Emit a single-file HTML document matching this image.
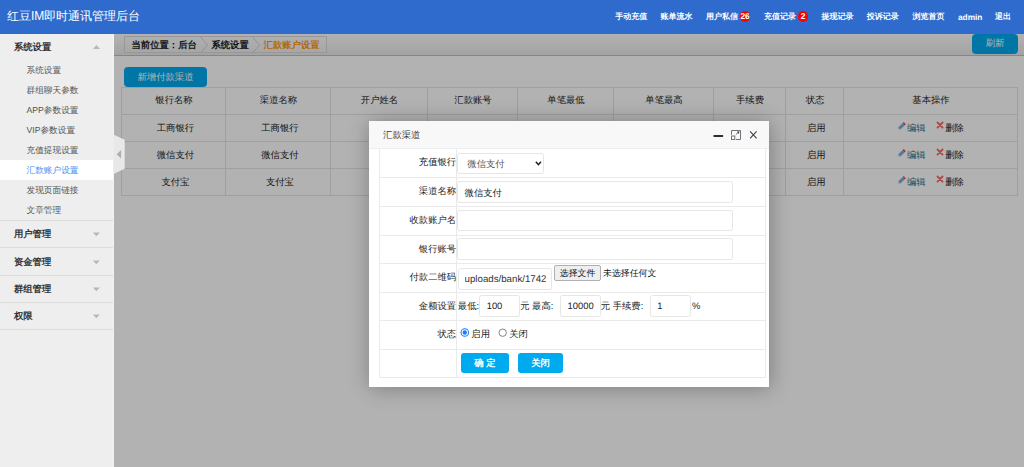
<!DOCTYPE html>
<html><head><meta charset="utf-8">
<style>
*{box-sizing:border-box;margin:0;padding:0}
html,body{width:1024px;height:467px;overflow:hidden;font-family:"Liberation Sans",sans-serif;background:#fff;position:relative;text-rendering:geometricPrecision}
.a{position:absolute;white-space:nowrap}
.nv{top:11.8px;font-size:8px;line-height:10px;color:#fff;font-weight:bold}
.badge{top:10.9px;height:10.7px;width:10.7px;border-radius:50%;background:#f00;color:#fff;font-weight:bold;font-size:8.4px;line-height:10.9px;text-align:center;letter-spacing:-0.2px}
.tri-up{width:0;height:0;border-left:3.6px solid transparent;border-right:3.6px solid transparent;border-bottom:4.1px solid #b8b8b8}
.tri-dn{width:0;height:0;border-left:3.6px solid transparent;border-right:3.6px solid transparent;border-top:4.1px solid #b8b8b8}
.hr{left:0;width:114px;height:1px;background:#dcdcdc}
.dt{position:absolute;border-collapse:collapse;font-size:9.33px;color:#333;table-layout:fixed}
.dt td{border:1px solid #ddd;text-align:center;height:27px;padding:0 0 1px 0;white-space:nowrap;line-height:12px}
.btn{background:#00aaf0;color:#fff;border-radius:4px;text-align:center}
.lb{right:567.9px;font-size:9.33px;line-height:12px;color:#222;text-align:right}
.inp{border:1px solid #e6e6e6;border-radius:2.5px;background:#fff}
.mb{height:19.8px;background:#00aaee;border-radius:3px;color:#fff;font-weight:bold;font-size:9.33px;line-height:21.2px;text-align:center}
.rl{left:379px;width:387px;height:1px;background:#eaeaea}
</style></head><body>
<div class="a" style="left:0;top:0;width:1024px;height:33.6px;background:#2e6bcc"></div>
<div class="a" style="left:7px;top:8.2px;font-size:12px;line-height:16px;color:#fff;text-rendering:optimizeSpeed">红豆IM即时通讯管理后台</div>
<div class="a nv" style="left:615.3px">手动充值</div>
<div class="a nv" style="left:660.4px">账单流水</div>
<div class="a nv" style="left:705.9px">用户私信</div>
<div class="a nv" style="left:764px">充值记录</div>
<div class="a nv" style="left:821.5px">提现记录</div>
<div class="a nv" style="left:866.8px">投诉记录</div>
<div class="a nv" style="left:912.4px">浏览首页</div>
<div class="a nv" style="left:994.9px">退出</div>
<div class="a nv" style="left:958px;font-family:'Liberation Sans',sans-serif;font-size:8.3px;top:11.6px">admin</div>
<div class="a badge" style="left:739.7px">26</div>
<div class="a badge" style="left:797.6px">2</div>
<div class="a" style="left:0;top:33.6px;width:114px;height:434px;background:#eee"></div>
<div class="a " style="left:13.9px;top:41.3px;font-size:9.33px;letter-spacing:0px;line-height:12px;color:#333;font-weight:bold;">系统设置</div>
<svg class="a" style="left:90px;top:42px" width="14" height="10"><polygon points="3,7.1 10,7.1 6.5,3" fill="#b8b8b8"/></svg>
<div class="a " style="left:26.5px;top:63.7px;font-size:8.67px;letter-spacing:0px;line-height:12px;color:#555;font-weight:normal;">系统设置</div>
<div class="a " style="left:26.5px;top:83.7px;font-size:8.67px;letter-spacing:0px;line-height:12px;color:#555;font-weight:normal;">群组聊天参数</div>
<div class="a " style="left:26.5px;top:103.7px;font-size:8.67px;letter-spacing:0px;line-height:12px;color:#555;font-weight:normal;">APP参数设置</div>
<div class="a " style="left:26.5px;top:123.7px;font-size:8.67px;letter-spacing:0px;line-height:12px;color:#555;font-weight:normal;">VIP参数设置</div>
<div class="a " style="left:26.5px;top:143.7px;font-size:8.67px;letter-spacing:0px;line-height:12px;color:#555;font-weight:normal;">充值提现设置</div>
<div class="a" style="left:0;top:160px;width:114px;height:20px;background:#fff"></div>
<div class="a " style="left:26.5px;top:163.7px;font-size:8.67px;letter-spacing:0px;line-height:12px;color:#3d8bf5;font-weight:normal;">汇款账户设置</div>
<div class="a " style="left:26.5px;top:183.7px;font-size:8.67px;letter-spacing:0px;line-height:12px;color:#555;font-weight:normal;">发现页面链接</div>
<div class="a " style="left:26.5px;top:203.7px;font-size:8.67px;letter-spacing:0px;line-height:12px;color:#555;font-weight:normal;">文章管理</div>
<div class="a hr" style="top:220px"></div>
<div class="a " style="left:13.9px;top:228.2px;font-size:9.33px;letter-spacing:0px;line-height:12px;color:#333;font-weight:bold;">用户管理</div>
<svg class="a" style="left:90px;top:229.4px" width="14" height="10"><polygon points="2.9,3.4 9.8,3.4 6.35,7.2" fill="#b8b8b8"/></svg>
<div class="a hr" style="top:247.35px"></div>
<div class="a " style="left:13.9px;top:255.54999999999998px;font-size:9.33px;letter-spacing:0px;line-height:12px;color:#333;font-weight:bold;">资金管理</div>
<svg class="a" style="left:90px;top:256.75px" width="14" height="10"><polygon points="2.9,3.4 9.8,3.4 6.35,7.2" fill="#b8b8b8"/></svg>
<div class="a hr" style="top:274.7px"></div>
<div class="a " style="left:13.9px;top:282.9px;font-size:9.33px;letter-spacing:0px;line-height:12px;color:#333;font-weight:bold;">群组管理</div>
<svg class="a" style="left:90px;top:284.09999999999997px" width="14" height="10"><polygon points="2.9,3.4 9.8,3.4 6.35,7.2" fill="#b8b8b8"/></svg>
<div class="a hr" style="top:302.05px"></div>
<div class="a " style="left:13.9px;top:310.25px;font-size:9.33px;letter-spacing:0px;line-height:12px;color:#333;font-weight:bold;">权限</div>
<svg class="a" style="left:90px;top:311.45px" width="14" height="10"><polygon points="2.9,3.4 9.8,3.4 6.35,7.2" fill="#b8b8b8"/></svg>
<div class="a hr" style="top:329.40000000000003px"></div>
<div class="a" style="left:113px;top:33.6px;width:1px;height:434px;background:#f3f3f3"></div>
<div class="a" style="left:114px;top:33.6px;width:910px;height:434px;background:#fff"></div>
<div class="a" style="left:114px;top:33.6px;width:910px;height:22.6px;background:linear-gradient(#ffffff,#e9e9e9);border-bottom:1.4px solid #c0c0c0"></div>
<div class="a" style="left:124.3px;top:36.4px;width:202.3px;height:16.4px;border:1px solid #dadada;background:linear-gradient(#fbfbfb,#efefef)"></div>
<div class="a " style="left:131.5px;top:38.9px;font-size:9.33px;letter-spacing:0px;line-height:12px;color:#222;font-weight:bold;">当前位置：后台</div>
<svg class="a" style="left:199.5px;top:36.7px" width="10" height="16"><polyline points="0.5,0 7.5,8 0.5,16" fill="none" stroke="#d2d2d2" stroke-width="1"/></svg>
<div class="a " style="left:211.4px;top:38.9px;font-size:9.33px;letter-spacing:0px;line-height:12px;color:#222;font-weight:bold;">系统设置</div>
<svg class="a" style="left:252.3px;top:36.7px" width="10" height="16"><polyline points="0.5,0 7.5,8 0.5,16" fill="none" stroke="#d2d2d2" stroke-width="1"/></svg>
<div class="a " style="left:263.4px;top:38.9px;font-size:9.33px;letter-spacing:0px;line-height:12px;color:#ff9000;font-weight:normal;text-shadow:0.35px 0 0 #ff9000">汇款账户设置</div>
<div class="a btn" style="left:972px;top:34px;width:46px;height:20.2px;font-size:9.33px;line-height:18.4px">刷新</div>
<div class="a btn" style="left:124px;top:67px;width:83px;height:20px;font-size:9.33px;line-height:20px">新增付款渠道</div>
<div class="a" style="left:121px;top:87px;width:1px;height:109px;background:#e4e4e4"></div>
<div class="a" style="left:225px;top:87px;width:1px;height:109px;background:#e4e4e4"></div>
<div class="a" style="left:330px;top:87px;width:1px;height:109px;background:#e4e4e4"></div>
<div class="a" style="left:427px;top:87px;width:1px;height:109px;background:#e4e4e4"></div>
<div class="a" style="left:517px;top:87px;width:1px;height:109px;background:#e4e4e4"></div>
<div class="a" style="left:613px;top:87px;width:1px;height:109px;background:#e4e4e4"></div>
<div class="a" style="left:713px;top:87px;width:1px;height:109px;background:#e4e4e4"></div>
<div class="a" style="left:785px;top:87px;width:1px;height:109px;background:#e4e4e4"></div>
<div class="a" style="left:843px;top:87px;width:1px;height:109px;background:#e4e4e4"></div>
<div class="a" style="left:1017px;top:87px;width:1px;height:109px;background:#e4e4e4"></div>
<div class="a" style="left:121px;top:87px;width:897px;height:1px;background:#e4e4e4"></div>
<div class="a" style="left:121px;top:114px;width:897px;height:1px;background:#e4e4e4"></div>
<div class="a" style="left:121px;top:141px;width:897px;height:1px;background:#e4e4e4"></div>
<div class="a" style="left:121px;top:168px;width:897px;height:1px;background:#e4e4e4"></div>
<div class="a" style="left:121px;top:195px;width:897px;height:1px;background:#e4e4e4"></div>
<div class="a" style="left:122.0px;top:94.4px;width:104px;text-align:center;font-size:9.33px;line-height:12px;color:#222">银行名称</div>
<div class="a" style="left:226.0px;top:94.4px;width:105px;text-align:center;font-size:9.33px;line-height:12px;color:#222">渠道名称</div>
<div class="a" style="left:331.0px;top:94.4px;width:97px;text-align:center;font-size:9.33px;line-height:12px;color:#222">开户姓名</div>
<div class="a" style="left:428.0px;top:94.4px;width:90px;text-align:center;font-size:9.33px;line-height:12px;color:#222">汇款账号</div>
<div class="a" style="left:518.0px;top:94.4px;width:96px;text-align:center;font-size:9.33px;line-height:12px;color:#222">单笔最低</div>
<div class="a" style="left:614.0px;top:94.4px;width:100px;text-align:center;font-size:9.33px;line-height:12px;color:#222">单笔最高</div>
<div class="a" style="left:714.0px;top:94.4px;width:72px;text-align:center;font-size:9.33px;line-height:12px;color:#222">手续费</div>
<div class="a" style="left:786.0px;top:94.4px;width:58px;text-align:center;font-size:9.33px;line-height:12px;color:#222">状态</div>
<div class="a" style="left:844.0px;top:94.4px;width:174px;text-align:center;font-size:9.33px;line-height:12px;color:#222">基本操作</div>
<div class="a" style="left:123.4px;top:121.8px;width:104px;text-align:center;font-size:9.33px;line-height:12px;color:#222">工商银行</div>
<div class="a" style="left:227.4px;top:121.8px;width:105px;text-align:center;font-size:9.33px;line-height:12px;color:#222">工商银行</div>
<div class="a" style="left:787.3px;top:121.8px;width:58px;text-align:center;font-size:9.33px;line-height:12px;color:#222">启用</div>
<div class="a" style="left:123.4px;top:149.0px;width:104px;text-align:center;font-size:9.33px;line-height:12px;color:#222">微信支付</div>
<div class="a" style="left:227.4px;top:149.0px;width:105px;text-align:center;font-size:9.33px;line-height:12px;color:#222">微信支付</div>
<div class="a" style="left:787.3px;top:149.0px;width:58px;text-align:center;font-size:9.33px;line-height:12px;color:#222">启用</div>
<div class="a" style="left:123.4px;top:176.2px;width:104px;text-align:center;font-size:9.33px;line-height:12px;color:#222">支付宝</div>
<div class="a" style="left:227.4px;top:176.2px;width:105px;text-align:center;font-size:9.33px;line-height:12px;color:#222">支付宝</div>
<div class="a" style="left:787.3px;top:176.2px;width:58px;text-align:center;font-size:9.33px;line-height:12px;color:#222">启用</div>
<svg class="a" style="left:896px;top:120.5px" width="11" height="10"><polygon points="2,8.5 4.34,8.38 2.3,6.18" fill="#d0d0d0"/><polygon points="2.3,6.18 6.48,2.3 8.52,4.5 4.34,8.38" fill="#78ade0"/><polygon points="6.48,2.3 7.8,1.08 9.84,3.28 8.52,4.5" fill="#e8505a"/></svg>
<div class="a " style="left:907px;top:121.8px;font-size:9.33px;letter-spacing:0px;line-height:12px;color:#1d6f8a;font-weight:normal;">编辑</div>
<svg class="a" style="left:936px;top:121.0px" width="8" height="8"><path d="M1.5 1.5 L6.6 6.6 M6.6 1.5 L1.5 6.6" stroke="#f26a6a" stroke-width="1.8" stroke-linecap="round"/></svg>
<div class="a " style="left:945.2px;top:121.8px;font-size:9.33px;letter-spacing:0px;line-height:12px;color:#222;font-weight:normal;">删除</div>
<svg class="a" style="left:896px;top:147.6px" width="11" height="10"><polygon points="2,8.5 4.34,8.38 2.3,6.18" fill="#d0d0d0"/><polygon points="2.3,6.18 6.48,2.3 8.52,4.5 4.34,8.38" fill="#78ade0"/><polygon points="6.48,2.3 7.8,1.08 9.84,3.28 8.52,4.5" fill="#e8505a"/></svg>
<div class="a " style="left:907px;top:148.9px;font-size:9.33px;letter-spacing:0px;line-height:12px;color:#1d6f8a;font-weight:normal;">编辑</div>
<svg class="a" style="left:936px;top:148.1px" width="8" height="8"><path d="M1.5 1.5 L6.6 6.6 M6.6 1.5 L1.5 6.6" stroke="#f26a6a" stroke-width="1.8" stroke-linecap="round"/></svg>
<div class="a " style="left:945.2px;top:148.9px;font-size:9.33px;letter-spacing:0px;line-height:12px;color:#222;font-weight:normal;">删除</div>
<svg class="a" style="left:896px;top:174.6px" width="11" height="10"><polygon points="2,8.5 4.34,8.38 2.3,6.18" fill="#d0d0d0"/><polygon points="2.3,6.18 6.48,2.3 8.52,4.5 4.34,8.38" fill="#78ade0"/><polygon points="6.48,2.3 7.8,1.08 9.84,3.28 8.52,4.5" fill="#e8505a"/></svg>
<div class="a " style="left:907px;top:175.9px;font-size:9.33px;letter-spacing:0px;line-height:12px;color:#1d6f8a;font-weight:normal;">编辑</div>
<svg class="a" style="left:936px;top:175.1px" width="8" height="8"><path d="M1.5 1.5 L6.6 6.6 M6.6 1.5 L1.5 6.6" stroke="#f26a6a" stroke-width="1.8" stroke-linecap="round"/></svg>
<div class="a " style="left:945.2px;top:175.9px;font-size:9.33px;letter-spacing:0px;line-height:12px;color:#222;font-weight:normal;">删除</div>
<div class="a" style="left:114px;top:33.6px;width:910px;height:434px;background:rgba(0,0,0,0.3)"></div>
<svg class="a" style="left:113px;top:133.5px" width="12" height="41"><polygon points="0.5,0.4 11.7,5.7 11.7,34.7 0.5,40.1" fill="#e8e8e8"/><polygon points="3.7,20.3 8.1,16.1 8.1,24.5" fill="#adadad"/></svg>
<div class="a" style="left:369px;top:120.5px;width:400px;height:266.7px;background:#fff;box-shadow:1px 1px 20px rgba(0,0,0,0.3)"></div>
<div class="a" style="left:369px;top:120.5px;width:400px;height:28px;background:#f8f8f8;border-bottom:1px solid #eee"></div>
<div class="a " style="left:383.1px;top:128.6px;font-size:9.33px;letter-spacing:0px;line-height:12px;color:#333;font-weight:normal;">汇款渠道</div>
<svg class="a" style="left:710px;top:128px" width="50" height="14">
<rect x="3.4" y="7" width="9.8" height="1.9" rx="0.6" fill="#2d2d38"/>
</svg>
<svg class="a" style="left:726px;top:126px" width="20" height="18">
<path d="M5.5 8.8 V4.5 H14.5 V13.5 H10" fill="none" stroke="#72727a" stroke-width="1"/>
<rect x="5.5" y="10" width="3.3" height="3.5" fill="none" stroke="#72727a" stroke-width="1"/>
<line x1="9.9" y1="8.6" x2="12" y2="6.6" stroke="#72727a" stroke-width="1"/>
<polygon points="13.4,5.3 10.9,5.8 12.9,7.9" fill="#3e3e48"/>
</svg>
<svg class="a" style="left:710px;top:128px" width="50" height="14">
<path d="M40.1 3.4 L46.6 10.3 M46.6 3.4 L40.1 10.3" stroke="#3c3c46" stroke-width="1.05"/>
</svg>
<div class="a" style="left:379px;top:148.5px;width:387px;height:229.5px;border:1px solid #eaeaea;border-top:none"></div>
<div class="a" style="left:456px;top:148.5px;width:1px;height:229px;background:#eaeaea"></div>
<div class="a rl" style="top:177px"></div>
<div class="a rl" style="top:206px"></div>
<div class="a rl" style="top:235px"></div>
<div class="a rl" style="top:263px"></div>
<div class="a rl" style="top:292px"></div>
<div class="a rl" style="top:320px"></div>
<div class="a rl" style="top:349px"></div>
<div class="a lb" style="top:156.35px">充值银行</div>
<div class="a lb" style="top:185.10px">渠道名称</div>
<div class="a lb" style="top:214.10px">收款账户名</div>
<div class="a lb" style="top:242.60px">银行账号</div>
<div class="a lb" style="top:271.10px">付款二维码</div>
<div class="a lb" style="top:299.60px">金额设置</div>
<div class="a lb" style="top:328.10px">状态</div>
<div class="a inp" style="left:457.2px;top:153.2px;width:86.8px;height:20.6px"></div>
<div class="a " style="left:467.3px;top:157.7px;font-size:9.33px;letter-spacing:0px;line-height:12px;color:#555;font-weight:normal;">微信支付</div>
<svg class="a" style="left:534.5px;top:161px" width="7.5" height="5"><polyline points="0.8,0.8 3.4,3.6 6,0.8" fill="none" stroke="#222" stroke-width="1.4"/></svg>
<div class="a inp" style="left:457.2px;top:181px;width:275.4px;height:21.8px"></div>
<div class="a " style="left:464.6px;top:186.5px;font-size:9.33px;letter-spacing:0px;line-height:12px;color:#222;font-weight:normal;">微信支付</div>
<div class="a inp" style="left:457.2px;top:209.6px;width:275.4px;height:21.6px"></div>
<div class="a inp" style="left:457.2px;top:238.2px;width:275.4px;height:21.6px"></div>
<div class="a inp" style="left:457.8px;top:268.2px;width:93.8px;height:21.4px"></div>
<div class="a" style="left:464.6px;top:270px;width:81px;height:18px;overflow:hidden"><span class="a" style="left:0;top:4.3px;font-size:9.7px;line-height:12px;color:#333">uploads/bank/17429</span></div>
<div class="a" style="left:554.4px;top:264.7px;width:46.3px;height:16.6px;background:#efefef;border:1px solid #b0b0b0;border-radius:2px;font-size:8.9px;line-height:15.4px;text-align:center;color:#111">选择文件</div>
<div class="a " style="left:603px;top:266.8px;font-size:8.9px;letter-spacing:0px;line-height:12px;color:#111;font-weight:normal;">未选择任何文</div>
<div class="a " style="left:457.8px;top:299.8px;font-size:9.33px;letter-spacing:0px;line-height:12px;color:#222;font-weight:normal;">最低:</div>
<div class="a inp" style="left:479.4px;top:295.2px;width:41px;height:21.8px"></div>
<div class="a " style="left:486.7px;top:299.8px;font-size:9.4px;letter-spacing:0px;line-height:12px;color:#222;font-weight:normal;letter-spacing:0">100</div>
<div class="a " style="left:520.2px;top:299.8px;font-size:9.33px;letter-spacing:0px;line-height:12px;color:#222;font-weight:normal;">元 最高:</div>
<div class="a inp" style="left:560.2px;top:295.2px;width:40.4px;height:21.8px"></div>
<div class="a " style="left:567.6px;top:299.8px;font-size:9.4px;letter-spacing:0px;line-height:12px;color:#222;font-weight:normal;letter-spacing:0">10000</div>
<div class="a " style="left:600.8px;top:299.8px;font-size:9.33px;letter-spacing:0px;line-height:12px;color:#222;font-weight:normal;">元 手续费:</div>
<div class="a inp" style="left:650.4px;top:295.2px;width:40.4px;height:21.8px"></div>
<div class="a " style="left:657.2px;top:299.8px;font-size:9.4px;letter-spacing:0px;line-height:12px;color:#222;font-weight:normal;letter-spacing:0">1</div>
<div class="a " style="left:692px;top:299.8px;font-size:9.4px;letter-spacing:0px;line-height:12px;color:#222;font-weight:normal;letter-spacing:0">%</div>
<svg class="a" style="left:460px;top:328px" width="10" height="10"><circle cx="4.8" cy="4.5" r="3.75" fill="#fff" stroke="#1a7cff" stroke-width="1.1"/><circle cx="4.8" cy="4.5" r="2.2" fill="#1a7cff"/></svg>
<div class="a " style="left:471.3px;top:328.1px;font-size:9.33px;letter-spacing:0px;line-height:12px;color:#222;font-weight:normal;">启用</div>
<svg class="a" style="left:498px;top:328px" width="10" height="10"><circle cx="4.7" cy="4.7" r="3.7" fill="#fff" stroke="#767676" stroke-width="0.9"/></svg>
<div class="a " style="left:509.2px;top:328.1px;font-size:9.33px;letter-spacing:0px;line-height:12px;color:#222;font-weight:normal;">关闭</div>
<div class="a mb" style="left:461px;top:353.2px;width:47.75px">确 定</div>
<div class="a mb" style="left:518px;top:353.2px;width:45px">关闭</div>
</body></html>
